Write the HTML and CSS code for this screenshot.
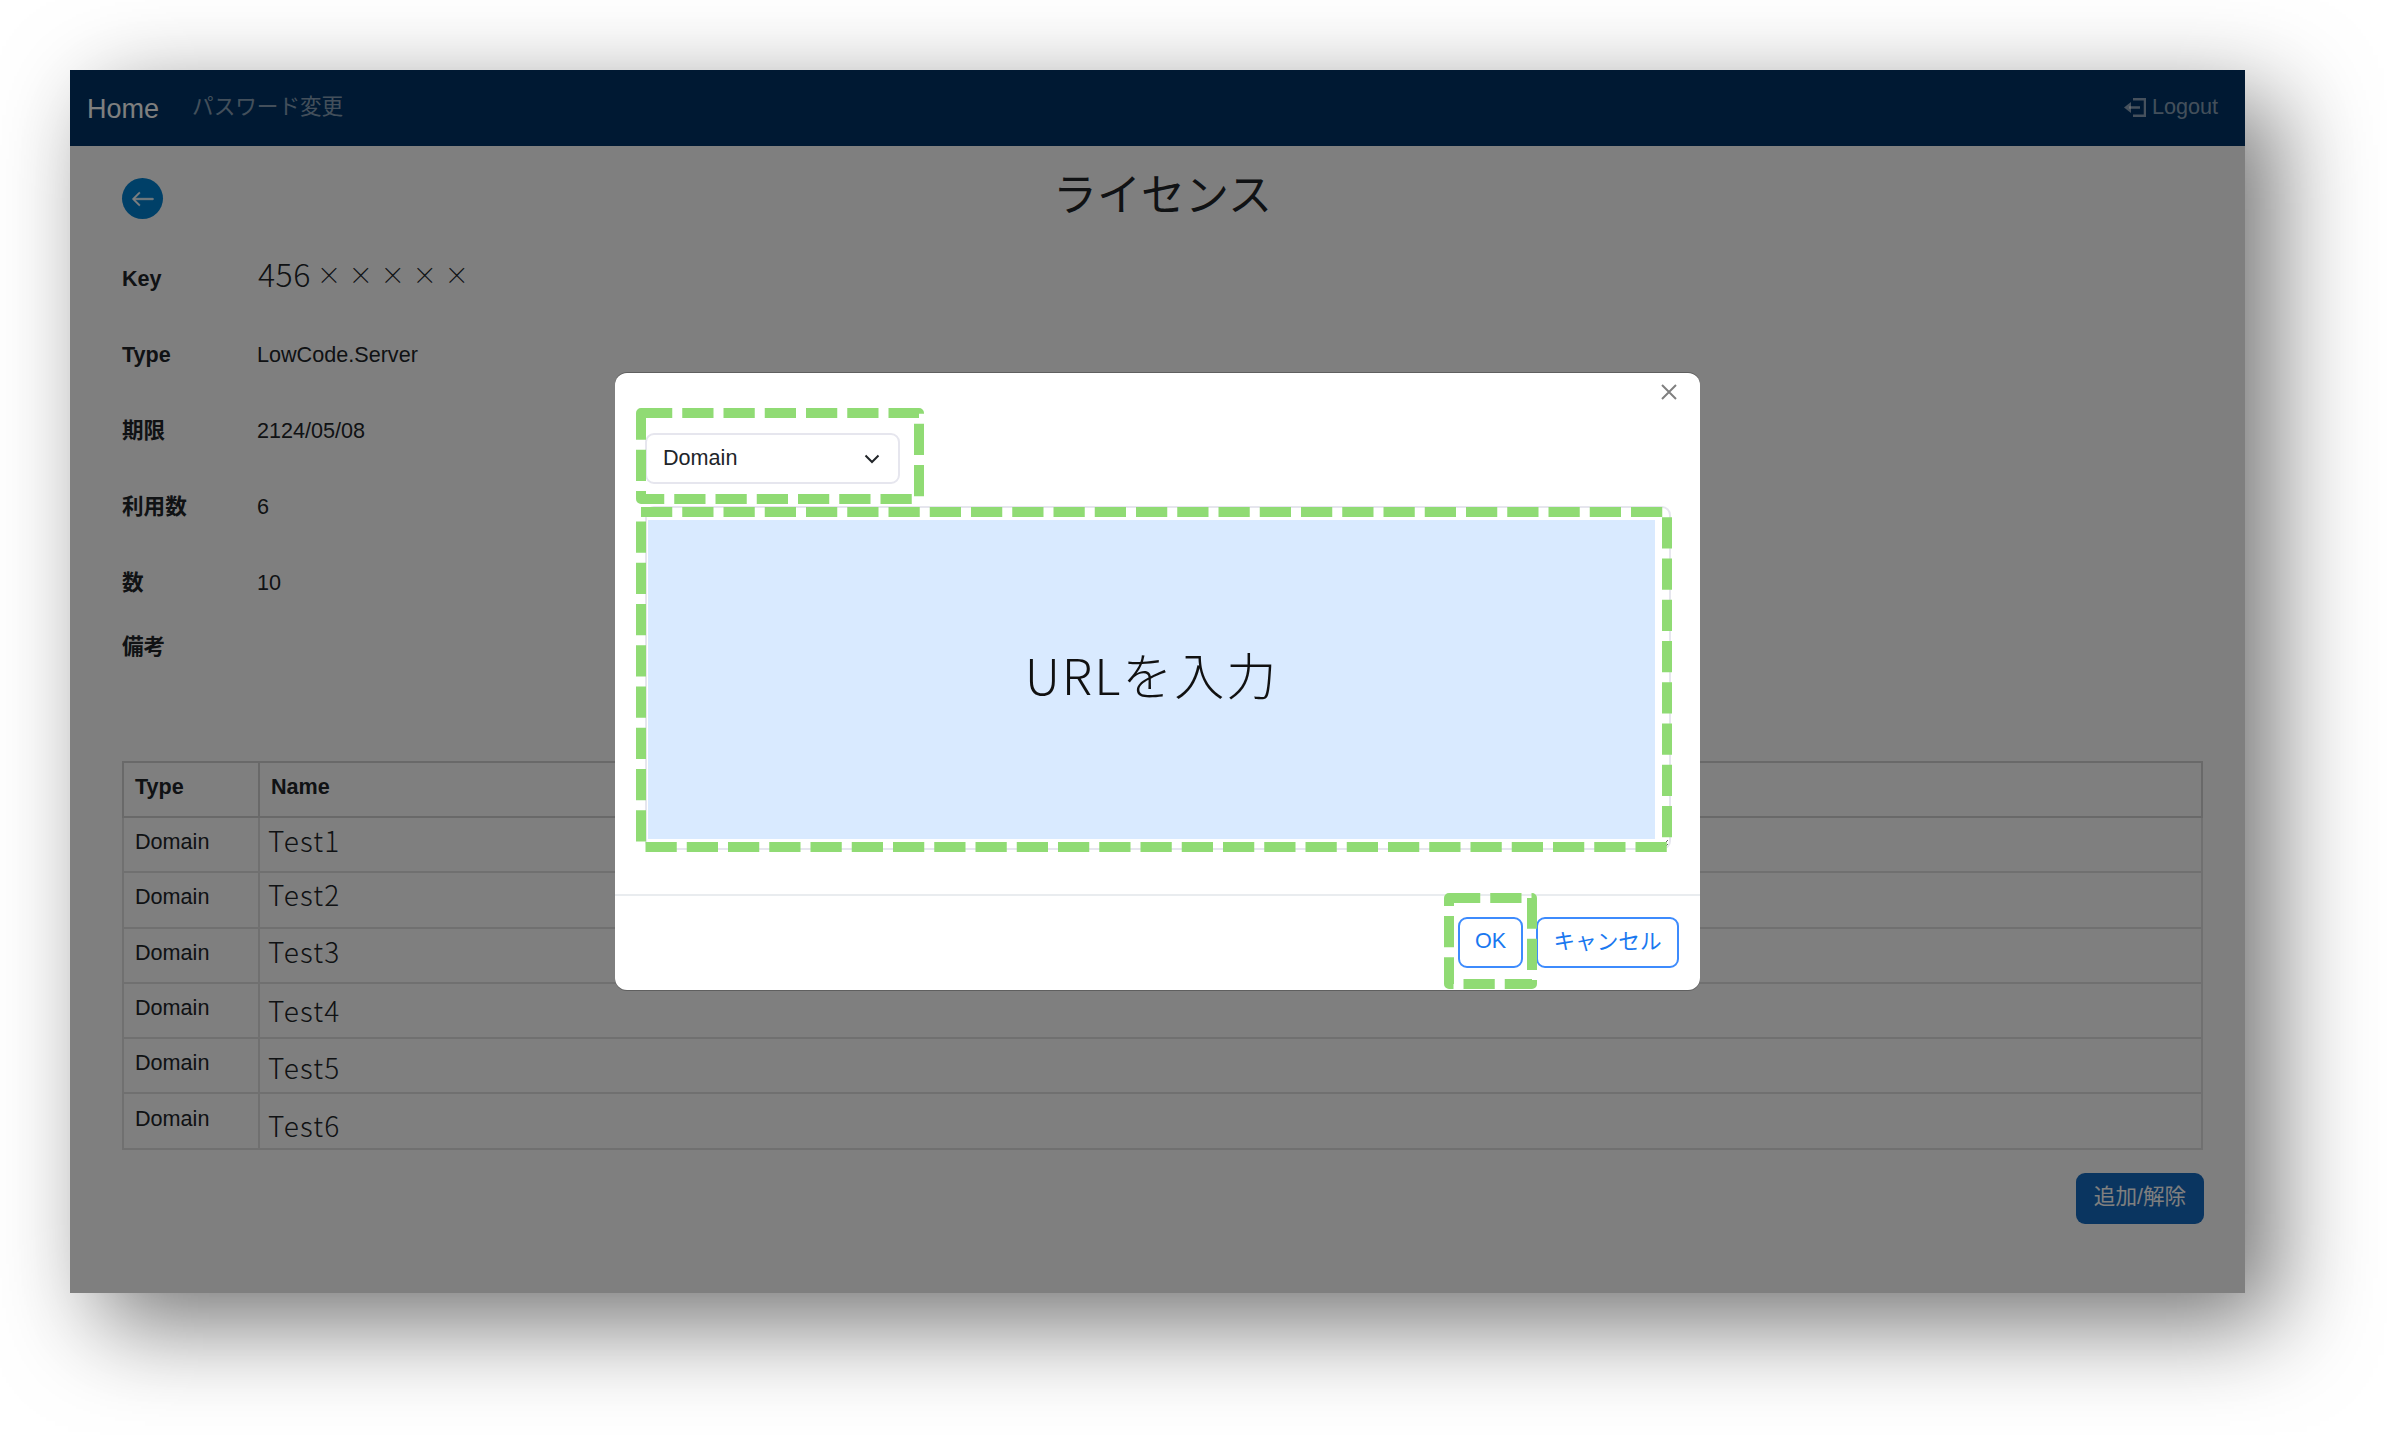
FILE: index.html
```html
<!DOCTYPE html>
<html lang="ja">
<head>
  <meta charset="utf-8">
  <title>ライセンス</title>
  <link rel="stylesheet" href="styles.css">
</head>
<body>
  <div class="window">
    <nav class="navbar">
      <a class="brand">Home</a>
      <a class="nav-link">パスワード変更</a>
      <a class="logout">
        <svg class="logout-icon" viewBox="0 0 22 19" fill="none" stroke="currentColor" stroke-width="2.5">
          <path d="M9 1.300h12v16.400H9"/>
          <path d="M16 9.500H5"/>
          <path d="M0 9.500l7-5.500v11z" fill="currentColor" stroke="none"/>
        </svg>
        Logout
      </a>
    </nav>

    <main class="content">
      <div class="title-row">
        <span class="back-btn">
          <svg viewBox="0 0 16 16" fill="currentColor" stroke="currentColor" stroke-width=".4"><path fill-rule="evenodd" d="M15 8a.5.5 0 0 0-.5-.5H2.707l3.147-3.146a.5.5 0 1 0-.708-.708l-4 4a.5.5 0 0 0 0 .708l4 4a.5.5 0 0 0 .708-.708L2.707 8.500H14.500A.5.5 0 0 0 15 8z"/></svg>
        </span>
        <h1 class="title">ライセンス</h1>
      </div>

      <dl class="details">
        <div class="detail-row"><dt>Key</dt><dd class="thin key-value">456<span class="key-mask">×××××</span></dd></div>
        <div class="detail-row"><dt>Type</dt><dd>LowCode.Server</dd></div>
        <div class="detail-row"><dt class="cjk">期限</dt><dd>2124/05/08</dd></div>
        <div class="detail-row"><dt class="cjk">利用数</dt><dd>6</dd></div>
        <div class="detail-row"><dt class="cjk">数</dt><dd>10</dd></div>
        <div class="detail-row detail-note"><dt class="cjk">備考</dt><dd></dd></div>
      </dl>

      <table class="items">
        <thead>
          <tr><th class="col-type">Type</th><th>Name</th></tr>
        </thead>
        <tbody>
          <tr><td class="col-type">Domain</td><td><span class="thin name">Test1</span></td></tr>
          <tr><td class="col-type">Domain</td><td><span class="thin name">Test2</span></td></tr>
          <tr><td class="col-type">Domain</td><td><span class="thin name">Test3</span></td></tr>
          <tr><td class="col-type">Domain</td><td><span class="thin name">Test4</span></td></tr>
          <tr><td class="col-type">Domain</td><td><span class="thin name">Test5</span></td></tr>
          <tr><td class="col-type">Domain</td><td><span class="thin name">Test6</span></td></tr>
        </tbody>
      </table>

      <div class="actions">
        <button class="btn-primary">追加/解除</button>
      </div>
    </main>

    <div class="backdrop"></div>

    <div class="modal">
      <div class="modal-body">
        <svg class="close" viewBox="0 0 16 16" fill="none" stroke="currentColor" stroke-width="2"><path d="M1 1l14 14M15 1L1 15"/></svg>
        <div class="select">
          <span>Domain</span>
          <svg class="chevron" viewBox="0 0 16 10" fill="none" stroke="currentColor" stroke-width="2"><path d="M1.500 1.500L8 8l6.500-6.500"/></svg>
        </div>
        <textarea class="url-input"></textarea>
      </div>
      <div class="modal-footer">
        <button class="btn-outline btn-ok">OK</button>
        <button class="btn-outline btn-cancel">キャンセル</button>
      </div>

      <!-- annotations pasted on top of the screenshot -->
      <div class="note thin">URLを入力</div>
      <svg class="dash dash-select" width="288" height="96"><rect x="5" y="5" width="278" height="86"/></svg>
      <svg class="dash dash-input" width="1036" height="345"><rect x="5" y="5" width="1026" height="335"/></svg>
      <svg class="dash dash-ok" width="93" height="96"><rect x="5" y="5" width="83" height="86"/></svg>
    </div>
  </div>
</body>
</html>
```
FILE: styles.css
```css
html, body { margin: 0; background: #fff; }
body { padding: 70px 142px 142px 70px; width: 2175px; height: 1223px; overflow: hidden; font-family: "Liberation Sans", "Noto Sans CJK JP", sans-serif; font-size: 21.6px; color: #212529; }

.window { position: relative; width: 2175px; height: 1223px; background: #fff; box-shadow: 30px 30px 90px rgba(0, 0, 0, .55); }
.thin { font-family: "Noto Sans CJK JP", sans-serif; font-weight: 300; }

/* navbar */
.navbar { display: flex; align-items: center; height: 76px; padding: 0 27px 0 17px; background: #003366; color: #fff; }
.brand { font-size: 27px; margin-right: 33px; padding-top: 2px; }
.nav-link { color: rgba(255, 255, 255, .55); padding-bottom: 7px; }
.logout { display: flex; align-items: center; gap: 6px; margin-left: auto; color: rgba(255, 255, 255, .55); padding-bottom: 2px; }
.logout-icon { width: 22px; height: 19px; }

/* page */
.content { padding: 32px 42px 0 52px; }
.title-row { display: flex; justify-content: center; position: relative; height: 63px; }
.title { margin: -2px 0 0; font-family: "Noto Sans CJK JP", sans-serif; font-weight: 400; font-size: 44px; line-height: 32px; }
.back-btn { position: absolute; left: 0; top: 0; display: flex; align-items: center; justify-content: center; width: 41px; height: 41px; border-radius: 50%; background: #0080d0; color: #fff; }
.back-btn svg { width: 24px; height: 24px; }

.details { margin: 0; }
.detail-row { display: flex; align-items: center; height: 76px; }
.detail-note { height: 52px; }
.details dt { width: 135px; font-weight: 700; }
.details dt.cjk { padding-bottom: 6px; }
.details dd { margin: 0; }
.key-value { display: flex; align-items: center; font-size: 32px; letter-spacing: .5px; padding: 0 0 12px 1px; }
.key-mask { font-size: 24px; letter-spacing: 8px; margin-left: 6px; }

.items { width: 2081px; margin-top: 88px; border-collapse: collapse; }
.items th, .items td { height: 55px; padding: 0 11px; border: 2px solid #e0e0e0; text-align: left; box-sizing: border-box; }
.items th { border-color: #d2d2d2; padding-bottom: 6px; }
.items td { height: 55.300px; }
.items .col-type { width: 136px; }
.items tbody td { padding-bottom: 5px; }
.name { display: block; font-size: 28px; letter-spacing: 1.2px; line-height: 30px; margin-left: -3px; }
.items tr:nth-child(1) .name { margin-top: -5px; }
.items tr:nth-child(2) .name { margin-top: -7px; }
.items tr:nth-child(3) .name { margin-top: -3px; }
.items tr:nth-child(4) .name { margin-top: 3px; }
.items tr:nth-child(5) .name { margin-top: 7px; }
.items tr:nth-child(6) .name { margin-top: 13px; }

.actions { display: flex; justify-content: flex-end; margin-top: 23px; margin-right: -1px; }
.btn-primary { width: 128px; height: 51px; border: 0; border-radius: 9px; background: #146ac0; color: #fff; font: inherit; padding: 0 0 7px; }

.backdrop { position: absolute; inset: 0; background: rgba(0, 0, 0, .5); }

/* modal */
.modal { position: absolute; left: 545px; top: 303px; width: 1085px; height: 617px; box-sizing: border-box; background: #fff; border-radius: 12px; display: flex; flex-direction: column; box-shadow: 0 -1px 0 rgba(0, 0, 0, .25), 0 1px 0 rgba(0, 0, 0, .25); }
.modal-body { position: relative; height: 523px; padding: 60px 29px 0 30px; box-sizing: border-box; border-bottom: 2px solid #e9ecef; }
.close { position: absolute; top: 11px; right: 23px; width: 16px; height: 16px; color: #808080; }
.select { display: flex; align-items: center; justify-content: space-between; box-sizing: border-box; width: 255px; height: 51px; padding: 0 18px 2px 16px; border: 2px solid #e6e6ee; border-radius: 9px; color: #212529; }
.chevron { width: 16px; height: 10px; margin-top: 2px; }
.url-input { display: block; box-sizing: border-box; width: 1026px; height: 344px; margin: 22px 0 0; border: 2px solid #e6e6ee; border-radius: 9px; background: #fff; }
.modal-footer { display: flex; justify-content: flex-end; gap: 13px; padding: 21px 21px 0 0; }
.btn-outline { height: 51px; padding: 0 0 4px; border: 2px solid #3d8bfd; border-radius: 9px; background: #fff; color: #1a78f0; font: inherit; }
.btn-ok { width: 65px; }
.btn-cancel { width: 143px; padding-bottom: 6px; }

.note { position: absolute; left: 33px; top: 147px; width: 1007px; height: 319px; padding-bottom: 14px; box-sizing: border-box; display: flex; align-items: center; justify-content: center; background: #d9eaff; font-size: 50px; letter-spacing: 2px; color: #111; }
.dash { position: absolute; fill: none; stroke: #90db74; stroke-width: 10; stroke-dasharray: 31.250 10; stroke-linejoin: round; }
.dash-select { left: 21px; top: 35px; }
.dash-input { left: 21px; top: 134px; }
.dash-ok { left: 829px; top: 520px; }
```
